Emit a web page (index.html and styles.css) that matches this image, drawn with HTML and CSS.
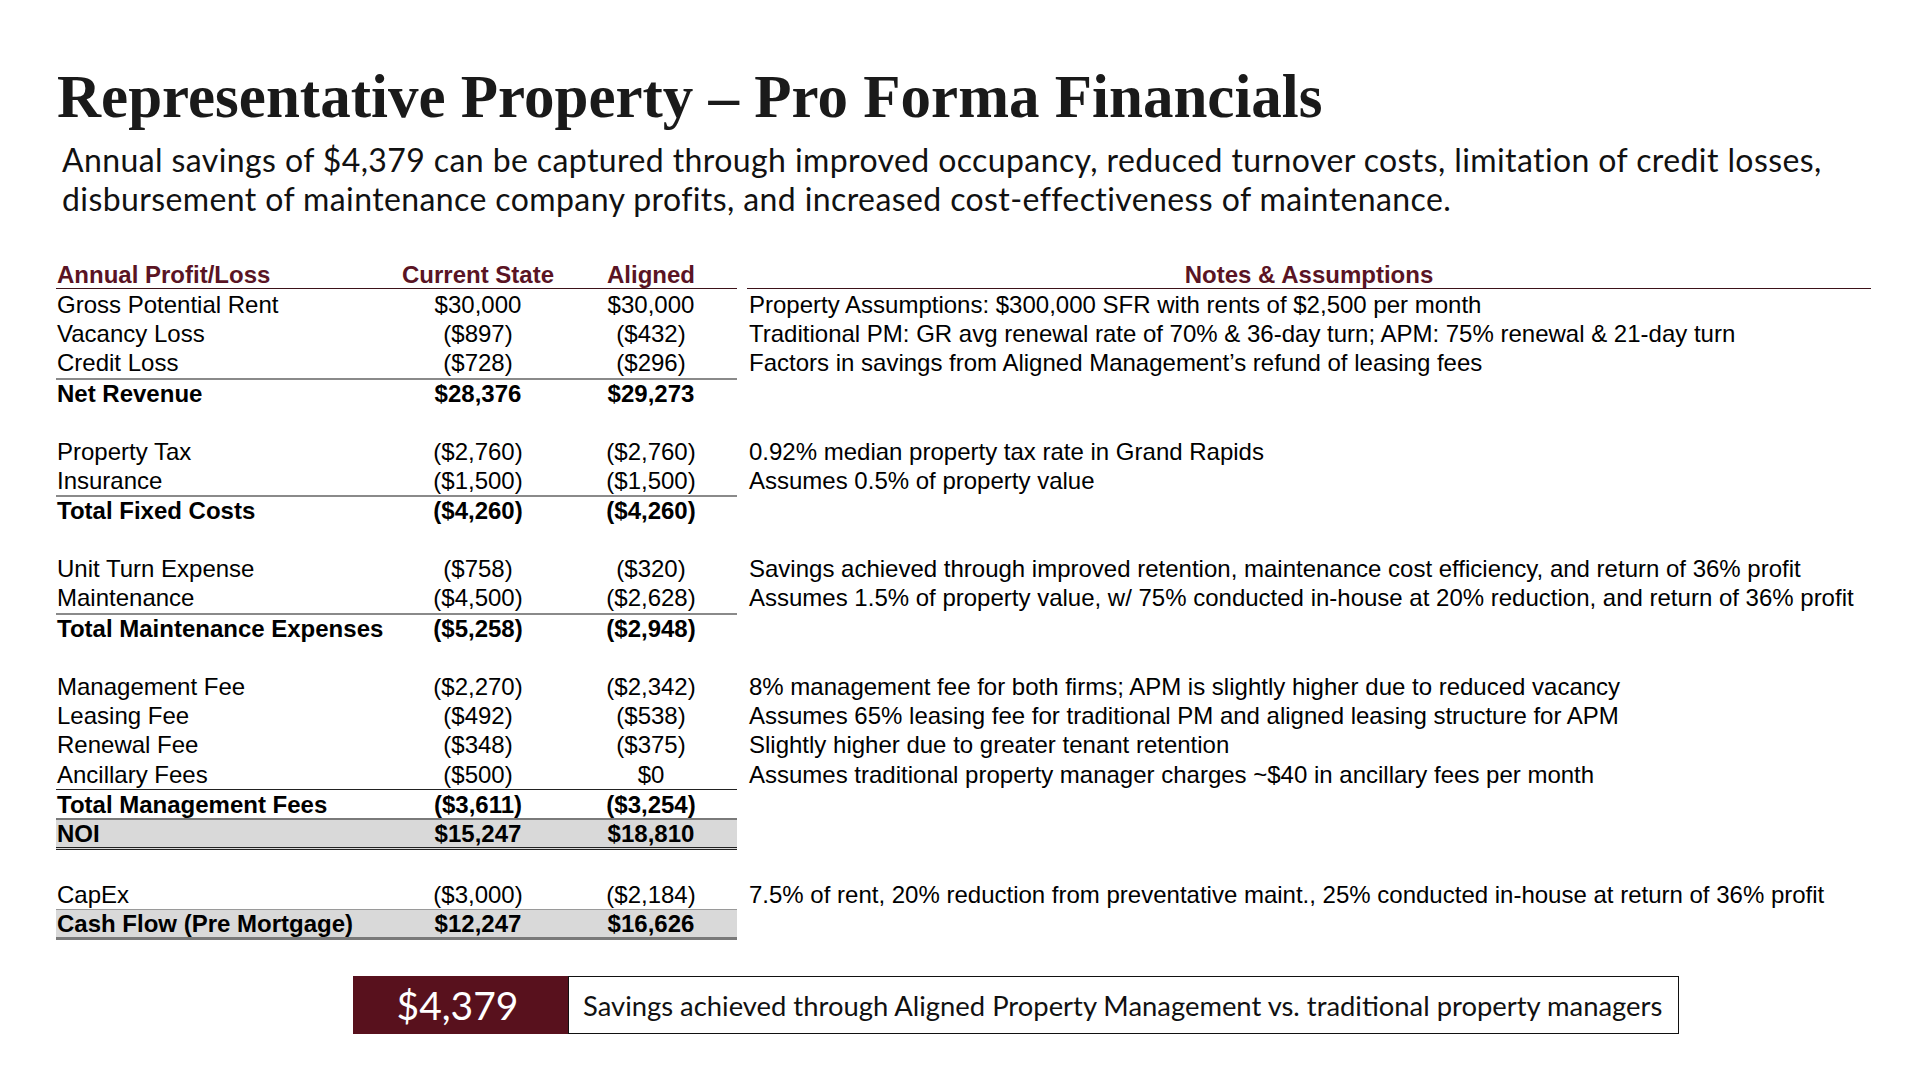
FILE: index.html
```html
<!DOCTYPE html>
<html>
<head>
<meta charset="utf-8">
<link rel="stylesheet" href="styles.css">
</head>
<body>
<div class="slide">
  <h1 class="title">Representative Property – Pro Forma Financials</h1>
  <p class="subtitle">Annual savings of $4,379 can be captured through improved occupancy, reduced turnover costs, limitation of credit losses, disbursement of maintenance company profits, and increased cost-effectiveness of maintenance.</p>

  <table class="pf">
    <colgroup>
      <col class="c-label"><col class="c-cur"><col class="c-al"><col class="c-gap"><col class="c-note">
    </colgroup>
    <thead>
      <tr class="head">
        <th class="lbl">Annual Profit/Loss</th><th class="num">Current State</th><th class="num">Aligned</th><th class="gap"></th><th class="note-h">Notes &amp; Assumptions</th>
      </tr>
    </thead>
    <tbody>
      <tr><td class="lbl">Gross Potential Rent</td><td class="num">$30,000</td><td class="num">$30,000</td><td></td><td class="note">Property Assumptions: $300,000 SFR with rents of $2,500 per month</td></tr>
      <tr><td class="lbl">Vacancy Loss</td><td class="num">($897)</td><td class="num">($432)</td><td></td><td class="note">Traditional PM: GR avg renewal rate of 70% &amp; 36-day turn; APM: 75% renewal &amp; 21-day turn</td></tr>
      <tr><td class="lbl">Credit Loss</td><td class="num">($728)</td><td class="num">($296)</td><td></td><td class="note">Factors in savings from Aligned Management’s refund of leasing fees</td></tr>
      <tr class="sub"><td class="lbl">Net Revenue</td><td class="num">$28,376</td><td class="num">$29,273</td><td></td><td></td></tr>
      <tr class="blank"><td colspan="5"></td></tr>
      <tr><td class="lbl">Property Tax</td><td class="num">($2,760)</td><td class="num">($2,760)</td><td></td><td class="note">0.92% median property tax rate in Grand Rapids</td></tr>
      <tr><td class="lbl">Insurance</td><td class="num">($1,500)</td><td class="num">($1,500)</td><td></td><td class="note">Assumes 0.5% of property value</td></tr>
      <tr class="sub"><td class="lbl">Total Fixed Costs</td><td class="num">($4,260)</td><td class="num">($4,260)</td><td></td><td></td></tr>
      <tr class="blank"><td colspan="5"></td></tr>
      <tr><td class="lbl">Unit Turn Expense</td><td class="num">($758)</td><td class="num">($320)</td><td></td><td class="note">Savings achieved through improved retention, maintenance cost efficiency, and return of 36% profit</td></tr>
      <tr><td class="lbl">Maintenance</td><td class="num">($4,500)</td><td class="num">($2,628)</td><td></td><td class="note">Assumes 1.5% of property value, w/ 75% conducted in-house at 20% reduction, and return of 36% profit</td></tr>
      <tr class="sub"><td class="lbl">Total Maintenance Expenses</td><td class="num">($5,258)</td><td class="num">($2,948)</td><td></td><td></td></tr>
      <tr class="blank"><td colspan="5"></td></tr>
      <tr><td class="lbl">Management Fee</td><td class="num">($2,270)</td><td class="num">($2,342)</td><td></td><td class="note">8% management fee for both firms; APM is slightly higher due to reduced vacancy</td></tr>
      <tr><td class="lbl">Leasing Fee</td><td class="num">($492)</td><td class="num">($538)</td><td></td><td class="note">Assumes 65% leasing fee for traditional PM and aligned leasing structure for APM</td></tr>
      <tr><td class="lbl">Renewal Fee</td><td class="num">($348)</td><td class="num">($375)</td><td></td><td class="note">Slightly higher due to greater tenant retention</td></tr>
      <tr><td class="lbl">Ancillary Fees</td><td class="num">($500)</td><td class="num">$0</td><td></td><td class="note">Assumes traditional property manager charges ~$40 in ancillary fees per month</td></tr>
      <tr class="sub dark"><td class="lbl">Total Management Fees</td><td class="num">($3,611)</td><td class="num">($3,254)</td><td></td><td></td></tr>
      <tr class="sub shade dbl"><td class="lbl">NOI</td><td class="num">$15,247</td><td class="num">$18,810</td><td></td><td></td></tr>
      <tr class="blank"><td colspan="5"></td></tr>
      <tr><td class="lbl">CapEx</td><td class="num">($3,000)</td><td class="num">($2,184)</td><td></td><td class="note">7.5% of rent, 20% reduction from preventative maint., 25% conducted in-house at return of 36% profit</td></tr>
      <tr class="sub shade last"><td class="lbl">Cash Flow (Pre Mortgage)</td><td class="num">$12,247</td><td class="num">$16,626</td><td></td><td></td></tr>
    </tbody>
  </table>

  <div class="callout">
    <div class="callout-num">$4,379</div>
    <div class="callout-text">Savings achieved through Aligned Property Management vs. traditional property managers</div>
  </div>
</div>
</body>
</html>
```

FILE: styles.css
```css
* { box-sizing: border-box; }
html, body { margin: 0; padding: 0; background: #fff; }
body { width: 1920px; height: 1080px; overflow: hidden; color: #000; }

.slide {
  padding: 66px 0 0 56px;
}

.title {
  margin: 0 0 0 1px;
  font-family: "Liberation Serif", "Times New Roman", serif;
  font-weight: 700;
  font-size: 61px;
  line-height: 62px;
  color: #1a1a1a;
}

.subtitle {
  margin: 12px 0 0 6px;
  width: 1840px;
  font-family: Lato, "Open Sans", sans-serif;
  font-size: 32px;
  letter-spacing: 0.4px;
  line-height: 39px;
  color: #111;
}

.pf {
  margin-top: 42px;
  border-collapse: separate;
  border-spacing: 0;
  table-layout: fixed;
  width: 1815px;
  font-family: "Liberation Sans", Arial, sans-serif;
  font-size: 24px;
}
.c-label { width: 335px; }
.c-cur { width: 174px; }
.c-al { width: 172px; }
.c-gap { width: 10px; }
.c-note { width: 1124px; }

.pf tr { height: 29.4px; }
.pf th, .pf td {
  padding: 0;
  line-height: 27px;
  white-space: nowrap;
  vertical-align: middle;
}
.pf th {
  color: #5a1424;
  font-weight: 700;
  border-bottom: 1px solid #3d1219;
}
.pf th.gap { border-bottom: none; }
.pf th.lbl { text-align: left; padding-left: 1px; }
.pf th.note-h { text-align: center; }

.lbl { text-align: left; padding-left: 1px !important; }
.num { text-align: center; }
.note { padding-left: 2px !important; }

.sub td { font-weight: 700; }
.sub td:nth-child(-n+3) { border-top: 2px solid #8a8a8a; }
.sub.dark td:nth-child(-n+3) { border-top: 1px solid #222; }
.shade td:nth-child(-n+3) { background: #d9d9d9; border-top: 2px solid #7a7a7a; }
.dbl td:nth-child(-n+3) { border-bottom: 3px double #222; }
.last td:nth-child(-n+3) { border-top: 1px solid #9a9a9a; border-bottom: 3px solid #7a7a7a; }

.blank td { border: none; }

.callout {
  display: flex;
  margin: 36px 0 0 297px;
  width: 1326px;
  height: 58px;
}
.callout-num {
  width: 215px;
  background: #58111d;
  color: #fff;
  font-family: Lato, "Open Sans", sans-serif;
  font-size: 39px;
  display: flex;
  align-items: center;
  justify-content: center;
  padding-right: 6px;
}
.callout-text {
  flex: 1;
  border: 1px solid #111;
  display: flex;
  align-items: center;
  padding-left: 14px;
  font-family: Lato, "Open Sans", sans-serif;
  font-size: 27.4px;
  white-space: nowrap;
  color: #111;
}
```
